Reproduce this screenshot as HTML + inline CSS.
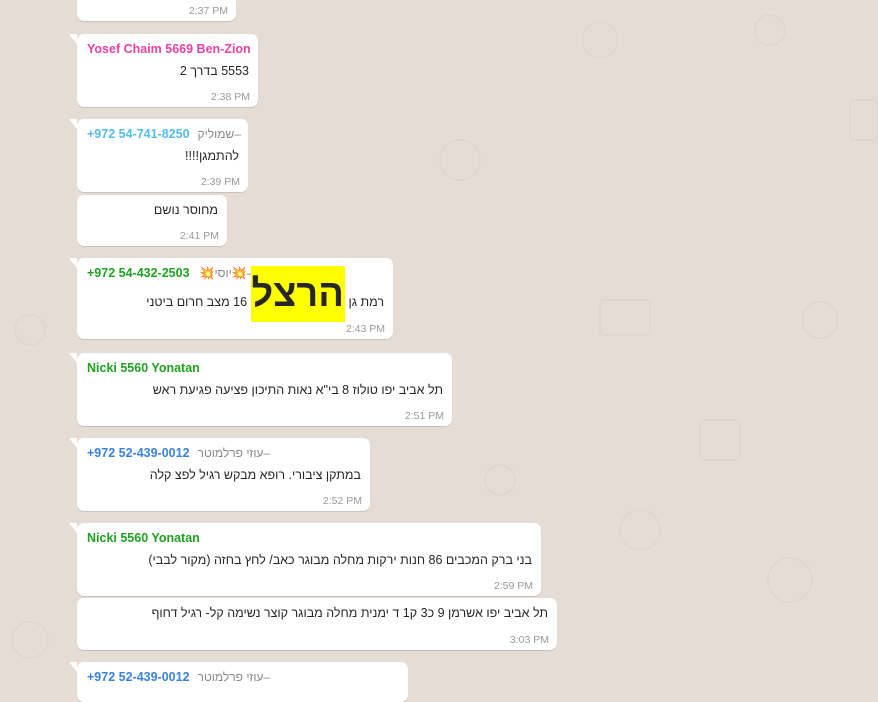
<!DOCTYPE html>
<html><head><meta charset="utf-8"><style>
*{margin:0;padding:0;box-sizing:border-box}
body{width:878px;height:683px;overflow:hidden;background:#e5ddd5;font-family:"Liberation Sans","Noto Sans CJK SC",sans-serif;position:relative}
.b{position:absolute;left:77px;background:#fff;border-radius:7px;box-shadow:0 1px 0.5px rgba(0,0,0,.13)}
.t:before{content:"";position:absolute;left:-8px;top:0;border-right:8px solid #fff;border-bottom:10px solid transparent}
.n{position:absolute;left:10px;top:8px;font-size:12.5px;font-weight:bold;white-space:nowrap;direction:ltr}
.m{position:absolute;right:9px;font-size:12.5px;color:#262626;direction:rtl;white-space:nowrap}
.tm{position:absolute;right:8px;bottom:4px;font-size:10.5px;color:#9a9a9a}
.g{color:#888;font-weight:normal;font-size:12px;margin-left:8px}
</style></head><body>
<svg width="878" height="683" style="position:absolute;left:0;top:0;opacity:.025" fill="none" stroke="#000" stroke-width="2">
<circle cx="600" cy="40" r="18"/><circle cx="770" cy="30" r="15"/><rect x="850" y="100" width="28" height="40" rx="5"/><circle cx="640" cy="530" r="20"/><circle cx="790" cy="580" r="22"/><rect x="600" y="300" width="50" height="35" rx="4"/><circle cx="30" cy="640" r="18"/><circle cx="460" cy="160" r="20"/><rect x="700" y="420" width="40" height="40" rx="6"/><circle cx="820" cy="320" r="18"/><circle cx="500" cy="480" r="15"/><circle cx="30" cy="330" r="15"/>
</svg>
<div class="b" style="top:-20px;width:159px;height:41px"><div class="tm">2:37 PM</div></div>
<div class="b t" style="top:34px;width:181px;height:73px"><div class="n" style="color:#e542a3">Yosef Chaim 5669 Ben-Zion</div><div class="m" style="top:30px">5553 בדרך 2</div><div class="tm">2:38 PM</div></div>
<div class="b t" style="top:119px;width:171px;height:73px"><div class="n" style="color:#53bdeb">+972 54-741-8250<span class="g"><bdi>שמוליק</bdi>–</span></div><div class="m" style="top:30px">להתמגן!!!!</div><div class="tm">2:39 PM</div></div>
<div class="b" style="top:195px;width:150px;height:51px"><div class="m" style="top:8px">מחוסר נושם</div><div class="tm">2:41 PM</div></div>
<div class="b t" style="top:258px;width:316px;height:81px"><div class="n" style="color:#1fa31f">+972 54-432-2503<span class="g" style="margin-left:10px"><bdi>💥יוסי💥</bdi>–</span></div><div class="m" style="top:8px;line-height:16px">רמת גן <span style="background:#ff0;font-size:38px;font-weight:bold;display:inline-block;height:56px;line-height:56px;padding:0 1px;vertical-align:baseline">הרצל</span> 16 מצב חרום ביטני</div><div class="tm">2:43 PM</div></div>
<div class="b t" style="top:353px;width:375px;height:73px"><div class="n" style="color:#1fa31f">Nicki 5560 Yonatan</div><div class="m" style="top:30px">תל אביב יפו טולוז 8 בי"א נאות התיכון פציעה פגיעת ראש</div><div class="tm">2:51 PM</div></div>
<div class="b t" style="top:438px;width:293px;height:73px"><div class="n" style="color:#3b82e0">+972 52-439-0012<span class="g"><bdi>עוזי פרלמוטר</bdi>–</span></div><div class="m" style="top:30px">במתקן ציבורי. רופא מבקש רגיל לפצ קלה</div><div class="tm">2:52 PM</div></div>
<div class="b t" style="top:523px;width:464px;height:73px"><div class="n" style="color:#1fa31f">Nicki 5560 Yonatan</div><div class="m" style="top:30px">בני ברק המכבים 86 חנות ירקות מחלה מבוגר כאב/ לחץ בחזה (מקור לבבי)</div><div class="tm">2:59 PM</div></div>
<div class="b" style="top:598px;width:480px;height:52px"><div class="m" style="top:8px">תל אביב יפו אשרמן 9 כ3 ק1 ד ימנית מחלה מבוגר קוצר נשימה קל- רגיל דחוף</div><div class="tm">3:03 PM</div></div>
<div class="b t" style="top:662px;width:331px;height:40px"><div class="n" style="color:#3b82e0">+972 52-439-0012<span class="g"><bdi>עוזי פרלמוטר</bdi>–</span></div></div>
</body></html>
